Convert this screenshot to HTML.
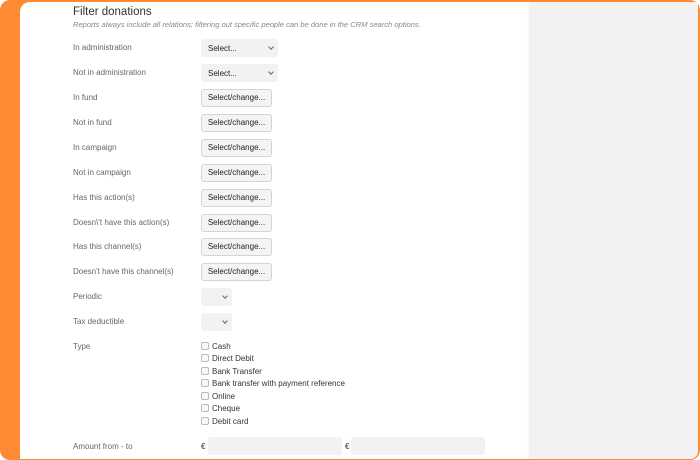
<!DOCTYPE html>
<html><head><style>
*{margin:0;padding:0;box-sizing:border-box}
html,body{width:700px;height:460px;overflow:hidden;background:#fff}
#outer{position:absolute;left:0;top:0;width:700px;height:460px;background:#ff8a33;border-radius:10px}
#main{position:absolute;left:20px;top:2px;width:678px;height:457px;background:#fff;border-top-left-radius:10px;border-bottom-right-radius:8px;overflow:hidden;font-family:"Liberation Sans",sans-serif}
#wrap{position:absolute;left:0;top:1px;width:100%;height:100%}
#side{position:absolute;left:510px;top:0;right:0;bottom:0;background:#f2f2f2;box-shadow:-1px 0 2px rgba(0,0,0,.08)}
h1{position:absolute;left:53px;top:3px;font-size:11.5px;font-weight:normal;color:#333}
.sub{position:absolute;left:53px;top:17px;font-size:7.55px;font-style:italic;color:#888;white-space:nowrap}
.lab{position:absolute;left:53px;font-size:8px;color:#666}
.sel,.btn,.inp{position:absolute;left:181px;height:18px;background:#f2f2f2;border-radius:3px;font-size:8px;color:#222}
.sel{width:77px;padding:5px 7px}
.sel::after{content:"";position:absolute;right:5px;top:6px;width:3px;height:3px;border-right:1px solid #666;border-bottom:1px solid #666;transform:rotate(45deg)}
.sm{width:31px}
.btn{width:71px;border:1px solid #d4d4d4;text-align:center;line-height:16px;background:#f4f4f4}
.cb{position:absolute;left:181px;font-size:8px;color:#333;line-height:10px}
.cb i{display:inline-block;width:8px;height:8px;border:1px solid #bbb;border-radius:2px;background:#f8f8f8;vertical-align:-1px;margin-right:3px}
.eur{position:absolute;font-size:8px;color:#333}
</style></head><body>
<div id="outer"></div>
<div id="main">
<div id="side"></div>
<div id="wrap">
<h1>Filter donations</h1>
<div class="sub">Reports always include all relations; filtering out specific people can be done in the CRM search options.</div>

<div class="lab" style="top:40px">In administration</div><div class="sel" style="top:36px">Select...</div>
<div class="lab" style="top:65px">Not in administration</div><div class="sel" style="top:61px">Select...</div>
<div class="lab" style="top:90px">In fund</div><div class="btn" style="top:86px">Select/change...</div>
<div class="lab" style="top:115px">Not in fund</div><div class="btn" style="top:111px">Select/change...</div>
<div class="lab" style="top:140px">In campaign</div><div class="btn" style="top:136px">Select/change...</div>
<div class="lab" style="top:165px">Not in campaign</div><div class="btn" style="top:161px">Select/change...</div>
<div class="lab" style="top:190px">Has this action(s)</div><div class="btn" style="top:186px">Select/change...</div>
<div class="lab" style="top:215px">Doesn\'t have this action(s)</div><div class="btn" style="top:211px">Select/change...</div>
<div class="lab" style="top:239px">Has this channel(s)</div><div class="btn" style="top:235px">Select/change...</div>
<div class="lab" style="top:264px">Doesn't have this channel(s)</div><div class="btn" style="top:260px">Select/change...</div>
<div class="lab" style="top:289px">Periodic</div><div class="sel sm" style="top:285px"></div>
<div class="lab" style="top:314px">Tax deductible</div><div class="sel sm" style="top:310px"></div>
<div class="lab" style="top:339px">Type</div>
<div class="cb" style="top:339px"><i></i>Cash</div>
<div class="cb" style="top:351px"><i></i>Direct Debit</div>
<div class="cb" style="top:364px"><i></i>Bank Transfer</div>
<div class="cb" style="top:376px"><i></i>Bank transfer with payment reference</div>
<div class="cb" style="top:389px"><i></i>Online</div>
<div class="cb" style="top:401px"><i></i>Cheque</div>
<div class="cb" style="top:414px"><i></i>Debit card</div>
<div class="lab" style="top:439px">Amount from - to</div>
<div class="eur" style="left:181px;top:439px">€</div><div class="inp" style="left:188px;width:134px;top:434px"></div>
<div class="eur" style="left:325px;top:439px">€</div><div class="inp" style="left:331px;width:134px;top:434px"></div>
</div>
</div>
</body></html>
